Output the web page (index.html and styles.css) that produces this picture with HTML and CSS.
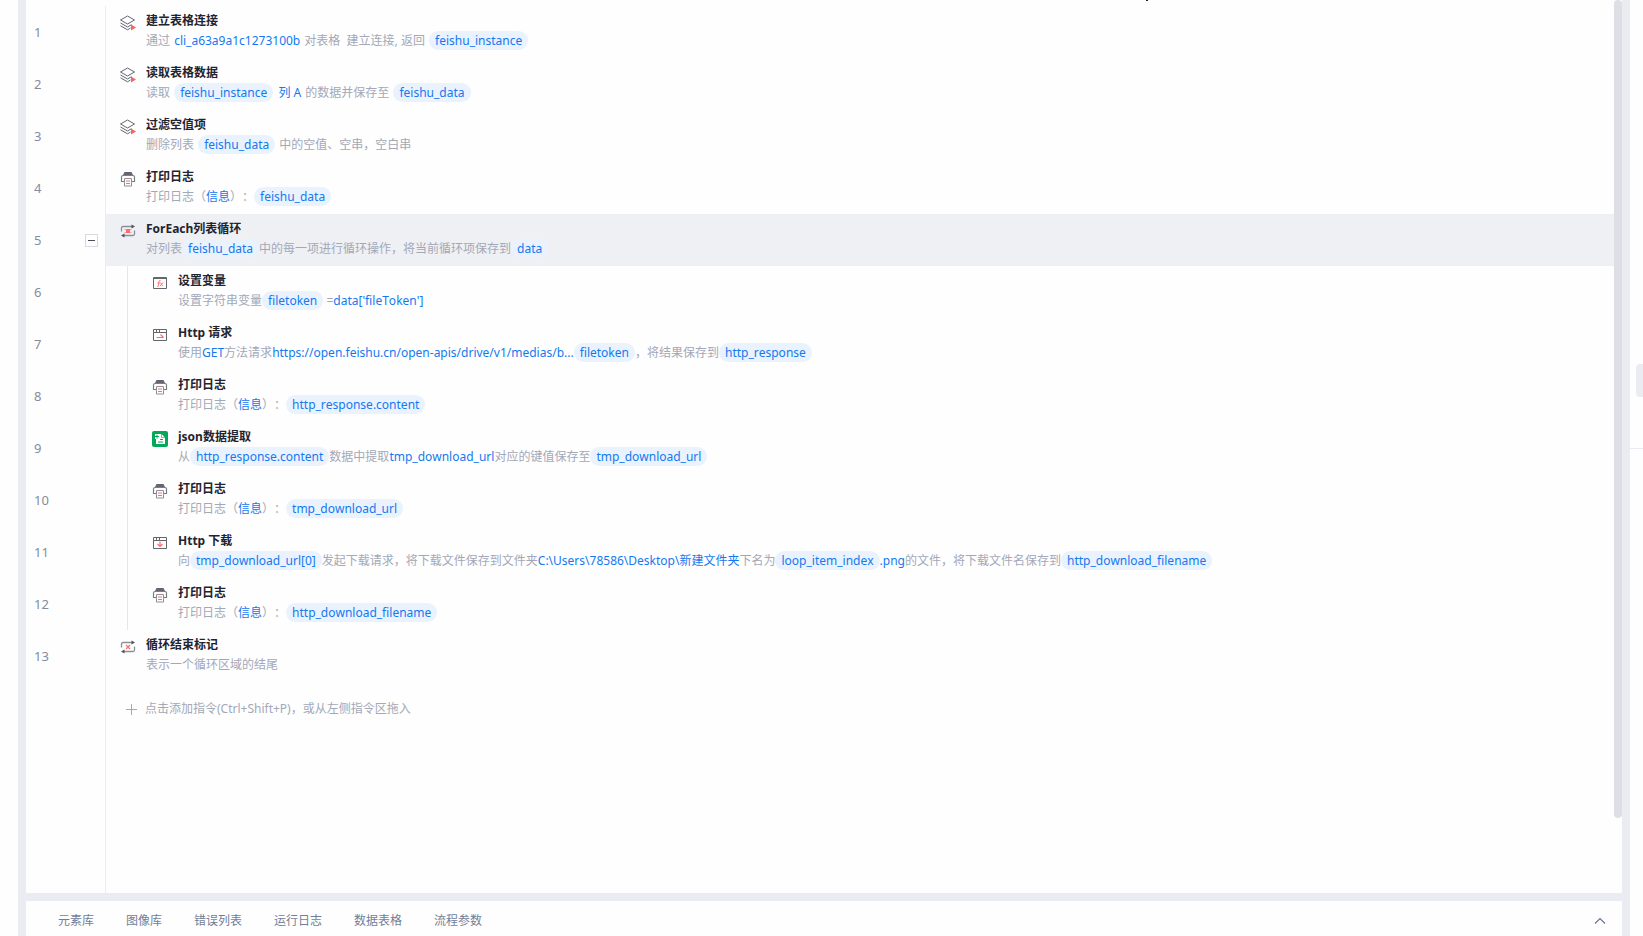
FILE: index.html
```html
<!DOCTYPE html>
<html lang="zh-CN">
<head>
    <meta charset="UTF-8">
    <meta name="viewport" content="width=device-width, initial-scale=1.0">
    <title>流程编辑</title>
    <link rel="stylesheet" href="styles.css">
</head>
<body>
    <svg class="sprite" aria-hidden="true">
        <symbol id="icon-layers" viewBox="0 0 16 16">
            <g fill="none" stroke="#63666f" stroke-linejoin="round">
                <path d="M7.5 1 14.5 5 7.5 9 .5 5z"/>
                <path d="M.5 8 7.5 12 11.500 9.700"/>
                <path d="M.5 10.8 7.5 14.8 10.5 13"/>
            </g>
            <path d="M11 9.500 16 12.500 11 15.500z" fill="#ff6060"/>
        </symbol>
        <symbol id="icon-print" viewBox="0 0 16 16">
            <path d="M4.500 1h7l1.500 3H3z" fill="#63666f"/>
            <path d="M4 10.500H1.500v-4.500q0-1.500 1.500-1.500h10q1.500 0 1.500 1.500v4.500H12" fill="none" stroke="#7b7e86" stroke-width="1.200"/>
            <path d="M4.500 7.500h7v7.500h-7z" fill="#fff" stroke="#8c8f96"/>
            <path d="M6 10h4M6 12.500h4" stroke="#ff6b6b" stroke-width="1.200"/>
        </symbol>
        <symbol id="icon-loop" viewBox="0 0 16 16">
            <path d="M1.500 8.500V5q0-1.500 1.500-1.500h9M14.500 7.500V11q0 1.500-1.500 1.500H4" fill="none" stroke="#8c8f96" stroke-width="1.300"/>
            <path d="M11.500 1.500 15 3.500 11.500 5.500zM4.500 10.500 1 12.500 4.500 14.500z" fill="#50535c"/>
            <path d="M4.500 6.500h7M4.500 9.500h7" stroke="#ffa3a3"/>
            <path d="M6 6h4v4H6z" fill="#ff6b6b"/>
        </symbol>
        <symbol id="icon-loop-end" viewBox="0 0 16 16">
            <path d="M1.500 8.500V5q0-1.500 1.500-1.500h9M14.500 7.500V11q0 1.500-1.500 1.500H4" fill="none" stroke="#8c8f96" stroke-width="1.300"/>
            <path d="M11.500 1.500 15 3.500 11.500 5.500zM4.500 10.500 1 12.500 4.500 14.500z" fill="#50535c"/>
            <path d="M6 6 10 10M10 6 6 10" stroke="#ff6b6b" stroke-width="1.200"/>
        </symbol>
        <symbol id="icon-variable" viewBox="0 0 16 16">
            <path d="M1.500 2.500h13v11h-13zM1.500 3.500h13" fill="none" stroke="#63666f"/>
            <path d="M8.500 5.500Q7 5.200 6.900 7L6.300 11Q6 12 5 11.700M5.500 8h2.500M8.500 7.500l2.200 3.700M11 7.500l-3 3.700" fill="none" stroke="#ff6b6b" stroke-width=".9"/>
        </symbol>
        <symbol id="icon-request" viewBox="0 0 16 16">
            <path d="M1.500 2.500h13v11h-13zM1.500 5.500h13M4.500 3v2M7.500 3v2" fill="none" stroke="#63666f"/>
            <path d="M4.500 10.500h7M8.500 7.500l3 3" fill="none" stroke="#ff6b6b" stroke-width="1.200"/>
        </symbol>
        <symbol id="icon-download" viewBox="0 0 16 16">
            <path d="M1.500 2.500h13v11h-13zM1.500 5.500h13M4.500 3v2M7.500 3v2" fill="none" stroke="#63666f"/>
            <path d="M8 6.500v5M5.500 9 8 11.500 10.500 9" fill="none" stroke="#ff6b6b" stroke-width="1.200"/>
        </symbol>
        <symbol id="icon-json" viewBox="0 0 16 16">
            <rect width="16" height="16" rx="2" fill="#04a85b"/>
            <path d="M3 3h6.500L13 6.500V13H4V8H3z" fill="#fff"/>
            <path d="M9.500 3v3.500H13" fill="none" stroke="#04a85b" stroke-width=".6"/>
            <path d="M3 5.500h4M5 3.500v4M8 8.500h3M6 11h5" stroke="#04a85b"/>
        </symbol>
    </svg>

    <main class="editor">
        <div class="workspace">
            <ol class="gutter">
                <li>1</li>
                <li>2</li>
                <li>3</li>
                <li>4</li>
                <li>5<button class="fold" type="button" aria-label="折叠"></button></li>
                <li>6</li>
                <li>7</li>
                <li>8</li>
                <li>9</li>
                <li>10</li>
                <li>11</li>
                <li>12</li>
                <li>13</li>
            </ol>
            <div class="flow">
                <div class="step spaced">
                    <svg class="icon"><use href="#icon-layers"/></svg>
                    <div class="step-text">
                        <h3>建立表格连接</h3>
                        <p>通过 <b>cli_a63a9a1c1273100b</b> 对表格 &nbsp;建立连接, 返回 <span class="var">feishu_instance</span></p>
                    </div>
                </div>
                <div class="step spaced">
                    <svg class="icon"><use href="#icon-layers"/></svg>
                    <div class="step-text">
                        <h3>读取表格数据</h3>
                        <p>读取 <span class="var">feishu_instance</span> <b>列 A</b> 的数据并保存至 <span class="var">feishu_data</span></p>
                    </div>
                </div>
                <div class="step spaced">
                    <svg class="icon"><use href="#icon-layers"/></svg>
                    <div class="step-text">
                        <h3>过滤空值项</h3>
                        <p>删除列表 <span class="var">feishu_data</span> 中的空值、空串，空白串</p>
                    </div>
                </div>
                <div class="step">
                    <svg class="icon"><use href="#icon-print"/></svg>
                    <div class="step-text">
                        <h3>打印日志</h3>
                        <p>打印日志（<b>信息</b>）：<span class="var">feishu_data</span></p>
                    </div>
                </div>
                <div class="step selected">
                    <svg class="icon"><use href="#icon-loop"/></svg>
                    <div class="step-text">
                        <h3>ForEach列表循环</h3>
                        <p>对列表<span class="var">feishu_data</span>中的每一项进行循环操作，将当前循环项保存到<span class="var">data</span></p>
                    </div>
                </div>
                <div class="loop-body">
                    <div class="step">
                        <svg class="icon"><use href="#icon-variable"/></svg>
                        <div class="step-text">
                            <h3>设置变量</h3>
                            <p>设置字符串变量<span class="var">filetoken</span> =<b>data['fileToken']</b></p>
                        </div>
                    </div>
                    <div class="step">
                        <svg class="icon"><use href="#icon-request"/></svg>
                        <div class="step-text">
                            <h3>Http 请求</h3>
                            <p>使用<b>GET</b>方法请求<b>https://open.feishu.cn/open-apis/drive/v1/medias/b...</b><span class="var">filetoken</span>，将结果保存到<span class="var">http_response</span></p>
                        </div>
                    </div>
                    <div class="step">
                        <svg class="icon"><use href="#icon-print"/></svg>
                        <div class="step-text">
                            <h3>打印日志</h3>
                            <p>打印日志（<b>信息</b>）：<span class="var">http_response.content</span></p>
                        </div>
                    </div>
                    <div class="step">
                        <svg class="icon"><use href="#icon-json"/></svg>
                        <div class="step-text">
                            <h3>json数据提取</h3>
                            <p>从<span class="var">http_response.content</span>数据中提取<b>tmp_download_url</b>对应的键值保存至<span class="var">tmp_download_url</span></p>
                        </div>
                    </div>
                    <div class="step">
                        <svg class="icon"><use href="#icon-print"/></svg>
                        <div class="step-text">
                            <h3>打印日志</h3>
                            <p>打印日志（<b>信息</b>）：<span class="var">tmp_download_url</span></p>
                        </div>
                    </div>
                    <div class="step">
                        <svg class="icon"><use href="#icon-download"/></svg>
                        <div class="step-text">
                            <h3>Http 下载</h3>
                            <p>向<span class="var">tmp_download_url[0]</span>发起下载请求，将下载文件保存到文件夹<b>C:\Users\78586\Desktop\新建文件夹</b>下名为<span class="var">loop_item_index</span><b>.png</b>的文件，将下载文件名保存到<span class="var">http_download_filename</span></p>
                        </div>
                    </div>
                    <div class="step">
                        <svg class="icon"><use href="#icon-print"/></svg>
                        <div class="step-text">
                            <h3>打印日志</h3>
                            <p>打印日志（<b>信息</b>）：<span class="var">http_download_filename</span></p>
                        </div>
                    </div>
                </div>
                <div class="step">
                    <svg class="icon"><use href="#icon-loop-end"/></svg>
                    <div class="step-text">
                        <h3>循环结束标记</h3>
                        <p>表示一个循环区域的结尾</p>
                    </div>
                </div>
                <button class="add-step" type="button">
                    <svg width="11" height="11" viewBox="0 0 11 11"><path d="M0 5.500h11M5.500 0v11" stroke="#a3a8b8"/></svg>
                    点击添加指令(Ctrl+Shift+P)，或从左侧指令区拖入
                </button>
            </div>
            <div class="scrollbar"><div class="thumb"></div></div>
            <div class="pointer"></div>
        </div>
        <nav class="tabs">
            <button type="button">元素库</button>
            <button type="button">图像库</button>
            <button type="button">错误列表</button>
            <button type="button">运行日志</button>
            <button type="button">数据表格</button>
            <button type="button">流程参数</button>
            <button class="expand" type="button" aria-label="展开">
                <svg width="12" height="8" viewBox="0 0 12 8"><path d="M1 6.500 6 1.500 11 6.500" fill="none" stroke="#68758f" stroke-width="1.200"/></svg>
            </button>
        </nav>
    </main>
    <aside class="side">
        <div class="side-top"><div class="handle"></div></div>
    </aside>
</body>
</html>
```

FILE: styles.css
```css
* {
    box-sizing: border-box;
}

body {
    margin: 0;
    padding-left: 18px;
    height: 100vh;
    display: flex;
    overflow: hidden;
    background: #fefefe;
    color: #a3a8b8;
    font-family: "Noto Sans", "Noto Sans CJK SC", sans-serif;
    font-size: 12px;
    line-height: 20px;
    font-kerning: none;
    text-spacing-trim: space-all;
}

button {
    padding: 0;
    border: none;
    background: none;
    color: inherit;
    font: inherit;
    font-kerning: none;
    cursor: pointer;
}

.sprite {
    position: absolute;
    width: 0;
    height: 0;
}

.editor {
    flex: 1;
    min-width: 0;
    display: flex;
    flex-direction: column;
    border: solid #ebecf1;
    border-width: 0 8px;
}

.workspace {
    position: relative;
    flex: 1;
    min-height: 0;
    display: flex;
}

/* line numbers */
.gutter {
    width: 80px;
    margin: 6px 0 0;
    padding: 0 7px 0 8px;
    border-right: 1px solid #ebecf1;
    list-style: none;
    color: #858c9c;
    font-size: 13px;
}

.gutter li {
    height: 52px;
    display: flex;
    align-items: center;
    justify-content: space-between;
}

.fold {
    width: 13px;
    height: 13px;
    display: flex;
    align-items: center;
    justify-content: center;
    border: 1px solid #d9dadf;
    background: #fff;
}

.fold::before {
    content: "";
    width: 7px;
    height: 1px;
    background: #4a4d55;
}

/* steps */
.flow {
    flex: 1;
    min-width: 0;
    padding-top: 6px;
}

.step {
    height: 52px;
    padding: 5px 14px;
    display: flex;
    gap: 10px;
    white-space: nowrap;
}

.step.selected {
    background: #eff0f4;
}

.icon {
    width: 16px;
    height: 16px;
    margin-top: 4px;
    flex: none;
}

.step h3 {
    margin: 0;
    color: #1f2430;
    font-size: 12px;
    font-weight: bold;
}

.step p {
    margin: 0;
}

.step b {
    color: #1479f0;
    font-weight: normal;
}

.var {
    display: inline-block;
    height: 19px;
    padding: 0 6px;
    border-radius: 10px;
    background: #eaf2fe;
    color: #1479f0;
    line-height: 19px;
}

.spaced b,
.spaced .var {
    margin: 0 1px;
}

.loop-body {
    margin-left: 21px;
    border-left: 1px solid #e6e7eb;
}

.loop-body .step {
    padding-left: 24px;
}

.add-step {
    height: 54px;
    padding-left: 20px;
    display: flex;
    align-items: center;
    gap: 8px;
}

.scrollbar {
    width: 8px;
}

.thumb {
    height: 818px;
    max-height: 100%;
    border-radius: 4px;
    background: #dedfe4;
}

/* tip of the mouse pointer at the top edge */
.pointer {
    position: absolute;
    top: 0;
    left: 1120px;
    width: 2px;
    height: 1px;
    background: #222;
}

/* bottom tabs */
.tabs {
    flex: none;
    height: 43px;
    padding: 4px 16px 0 32px;
    display: flex;
    align-items: center;
    gap: 32px;
    border-top: 8px solid #ebecf1;
    color: #727e98;
}

.expand {
    display: flex;
    margin-left: auto;
}

/* collapsed right panel */
.side {
    width: 13px;
}

.side-top {
    height: 48%;
    display: flex;
    align-items: flex-end;
    justify-content: flex-end;
    padding-bottom: 51px;
    border-bottom: 1px solid #ebecf1;
}

.handle {
    width: 7px;
    height: 33px;
    border-radius: 4px 0 0 4px;
    background: #ebecf1;
}
```
